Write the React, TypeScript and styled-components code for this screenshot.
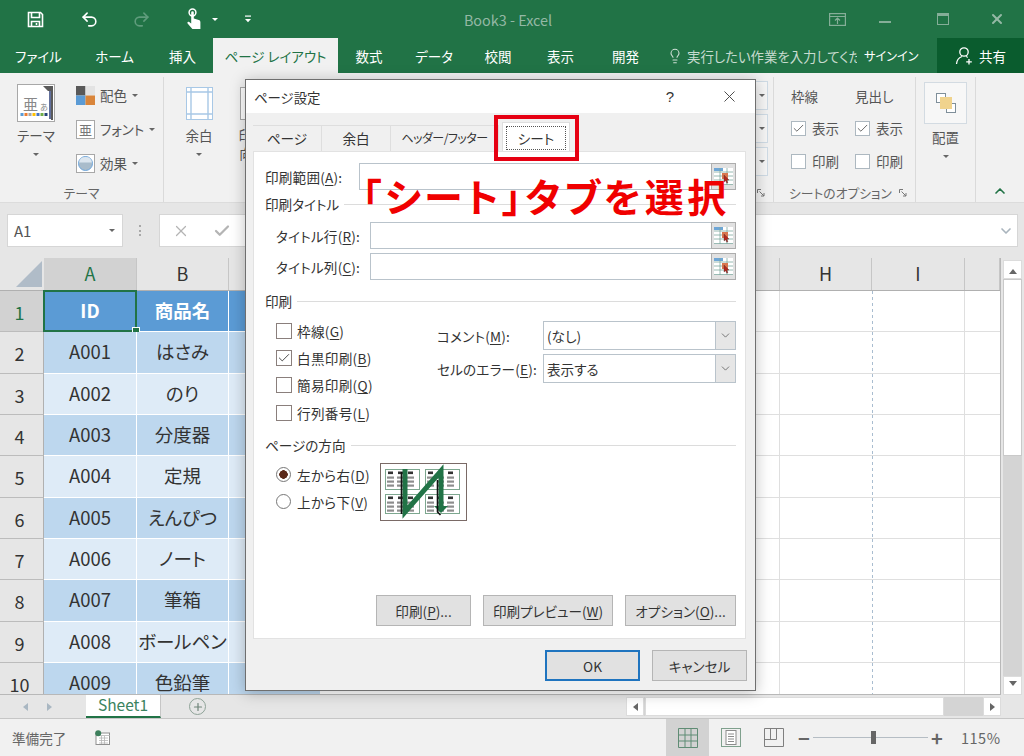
import React from 'react'
import styled, { createGlobalStyle } from 'styled-components'
import { Check, ChevronDown, ChevronUp, Lightbulb, Plus, Redo2, Undo2, X } from 'lucide-react'

const GlobalStyle = createGlobalStyle`
  html, body { margin: 0; padding: 0; background: #e6e6e6; }
  * { box-sizing: border-box; }
  u { text-underline-offset: 2px; }
`

const Caret = styled.span<{ $color?: string }>`
  display: inline-block;
  width: 0;
  height: 0;
  border-left: 3px solid transparent;
  border-right: 3px solid transparent;
  border-top: 3px solid ${p => p.$color || '#666'};
`

const App = () => {
  const rows = [
    ['A001', 'はさみ'], ['A002', 'のり'], ['A003', '分度器'], ['A004', '定規'], ['A005', 'えんぴつ'],
    ['A006', 'ノート'], ['A007', '筆箱'], ['A008', 'ボールペン'], ['A009', '色鉛筆'],
  ]
  return (
    <Page>
      <GlobalStyle />
      <TitleBar>
        <Qat>
          <QatSlot $w={52}><SaveIcon /></QatSlot>
          <QatSlot $w={56}><Undo2 size={19} color="#fff" strokeWidth={2} /></QatSlot>
          <QatSlot $w={48}><Redo2 size={19} color="#5f9c7c" strokeWidth={2} /></QatSlot>
          <QatSlot $w={30} $ml={14}><TouchIcon /></QatSlot>
          <QatSlot $w={12}><Caret $color="#fff" /></QatSlot>
          <QatSlot $w={8} $ml={23}><CustomizeIcon /></QatSlot>
        </Qat>
        <DocTitle>Book3 - Excel</DocTitle>
        <WinButtons>
          <WinSlot $w={48}><RibbonDisplayIcon /></WinSlot>
          <WinSlot $w={48}><MinLine /></WinSlot>
          <WinSlot $w={68}><MaxBox /></WinSlot>
          <WinSlot $w={40}><X size={16} color="#94b8a5" strokeWidth={3} /></WinSlot>
        </WinButtons>
      </TitleBar>

      <TabBar>
        <Tab $w={77}>ファイル</Tab>
        <Tab $w={75}>ホーム</Tab>
        <Tab $w={61}>挿入</Tab>
        <Tab $w={125} $active>ページ レイアウト</Tab>
        <Tab $w={62}>数式</Tab>
        <Tab $w={68}>データ</Tab>
        <Tab $w={60}>校閲</Tab>
        <Tab $w={65}>表示</Tab>
        <Tab $w={65}>開発</Tab>
        <TellMe>
          <Lightbulb size={16} color="#cfe0d6" strokeWidth={1.6} />
          <TellText>実行したい作業を入力してください</TellText>
        </TellMe>
        <SignIn>サインイン</SignIn>
        <Share><ShareIcon />共有</Share>
      </TabBar>

      <Ribbon>
        <Group $w={164}>
          <GroupBody>
            <BigButton $w={62} $ml={5}>
              <ThemeIcon />
              <BigLabel>テーマ</BigLabel>
              <Caret />
            </BigButton>
            <SmallStack>
              <SmallItem><PaletteIcon />配色 <Caret /></SmallItem>
              <SmallItem><FontIcon />フォント <Caret /></SmallItem>
              <SmallItem><EffectIcon />効果 <Caret /></SmallItem>
            </SmallStack>
          </GroupBody>
          <GroupLabel>テーマ</GroupLabel>
        </Group>
        <Group $w={610}>
          <GroupBody>
            <BigButton $w={70} $ml={0}>
              <MarginIcon />
              <BigLabel>余白</BigLabel>
              <Caret />
            </BigButton>
            <BigButton $w={36} $ml={0}>
              <OrientIcon />
              <BigLabel>印刷<br />向き</BigLabel>
            </BigButton>
            <MiniStack>
              <MiniBox><Caret /></MiniBox>
              <MiniBox><Caret /></MiniBox>
              <MiniBox><Caret /></MiniBox>
            </MiniStack>
          </GroupBody>
          <LauncherRow><LauncherIcon /></LauncherRow>
        </Group>
        <Group $w={142}>
          <SheetOptions>
            <OptionColumn>
              <OptionHead>枠線</OptionHead>
              <OptionRow><RibbonCheck><Check size={13} color="#555" strokeWidth={1.6} /></RibbonCheck>表示</OptionRow>
              <OptionRow><RibbonCheck />印刷</OptionRow>
            </OptionColumn>
            <OptionColumn>
              <OptionHead>見出し</OptionHead>
              <OptionRow><RibbonCheck><Check size={13} color="#555" strokeWidth={1.6} /></RibbonCheck>表示</OptionRow>
              <OptionRow><RibbonCheck />印刷</OptionRow>
            </OptionColumn>
          </SheetOptions>
          <LauncherRow>
            <GroupLabelInline>シートのオプション</GroupLabelInline>
            <LauncherIcon />
          </LauncherRow>
        </Group>
        <Group $w={60}>
          <ArrangeButton>
            <ArrangeTile><ArrangeIcon /></ArrangeTile>
            <BigLabel>配置</BigLabel>
            <Caret />
          </ArrangeButton>
        </Group>
        <Collapse><ChevronUp size={16} color="#217346" strokeWidth={2.5} /></Collapse>
      </Ribbon>

      <FormulaBar>
        <NameBox>A1<Caret /></NameBox>
        <Dots />
        <FormulaField>
          <FormulaButton><X size={18} color="#b4b4b4" strokeWidth={1.6} /></FormulaButton>
          <FormulaButton><Check size={18} color="#b4b4b4" strokeWidth={3} /></FormulaButton>
          <FormulaInput />
          <ChevronDown size={16} color="#a9b4bd" strokeWidth={2.5} />
        </FormulaField>
      </FormulaBar>

      <SheetArea>
        <GridArea>
          <HeaderRow>
            <Corner><CornerMark /></Corner>
            {[['A', 93], ['B', 92], ['C', 92], ['D', 92], ['E', 92], ['F', 92], ['G', 183], ['H', 92], ['I', 93], ['', 35]].map(([name, w], i) => (
              <ColHead key={i} $w={w as number} $selected={i === 0}>{name}</ColHead>
            ))}
          </HeaderRow>
          <DataRow>
            <RowHead $selected>1</RowHead>
            <TableCell $w={93} $kind="head">ID</TableCell>
            <TableCell $w={92} $kind="head">商品名</TableCell>
            <TableCell $w={92} $kind="head" />
            <BlankCells />
            <Selection><SelectionHandle /></Selection>
          </DataRow>
          {rows.map(([id, name], i) => (
            <DataRow key={id}>
              <RowHead>{i + 2}</RowHead>
              <TableCell $w={93} $kind={i % 2 ? 'light' : 'dark'}>{id}</TableCell>
              <TableCell $w={92} $kind={i % 2 ? 'light' : 'dark'}>{name}</TableCell>
              <TableCell $w={92} $kind={i % 2 ? 'light' : 'dark'} />
              <BlankCells />
            </DataRow>
          ))}
        </GridArea>
        <VScroll>
          <ScrollButton><ScrollArrow $dir="up" /></ScrollButton>
          <VThumb />
          <ScrollButton><ScrollArrow $dir="down" /></ScrollButton>
        </VScroll>
      </SheetArea>

      <SheetTabs>
        <TabNav><ScrollArrow $dir="left" $faint /><ScrollArrow $dir="right" $faint /></TabNav>
        <SheetTab>Sheet1</SheetTab>
        <AddSheet><Plus size={12} color="#6e8478" strokeWidth={2.4} /></AddSheet>
        <HScroll>
          <HButton><ScrollArrow $dir="left" /></HButton>
          <HThumb />
          <HButton><ScrollArrow $dir="right" /></HButton>
        </HScroll>
      </SheetTabs>

      <StatusBar>
        <Ready>準備完了</Ready>
        <MacroIcon />
        <ViewButtons>
          <ViewButton $active><NormalViewIcon /></ViewButton>
          <ViewButton><PageViewIcon /></ViewButton>
          <ViewButton><BreakViewIcon /></ViewButton>
        </ViewButtons>
        <ZoomSign>−</ZoomSign>
        <ZoomTrack><ZoomThumb /></ZoomTrack>
        <ZoomSign>+</ZoomSign>
        <ZoomValue>115%</ZoomValue>
      </StatusBar>

      <Dialog>
        <DialogTitle>
          <span>ページ設定</span>
          <DialogHelp>?</DialogHelp>
          <X size={19} color="#444" strokeWidth={1.2} />
        </DialogTitle>
        <DialogTabs>
          <DialogTab $w={69}>ページ</DialogTab>
          <DialogTab $w={69}>余白</DialogTab>
          <DialogTab $w={108} $tight>ヘッダー/フッター</DialogTab>
          <ActiveDialogTab><FocusRing>シート</FocusRing></ActiveDialogTab>
        </DialogTabs>
        <Panel>
          <FieldRow>
            <FieldLabel $w={94}>印刷範囲(<u>A</u>):</FieldLabel>
            <TextField />
            <PickerButton><PickerIcon /></PickerButton>
          </FieldRow>
          <SectionHead $top={4}><span>印刷タイトル</span><Rule /></SectionHead>
          <IndentedRow $top={8}>
            <FieldLabel $w={94}>タイトル行(<u>R</u>):</FieldLabel>
            <TextField />
            <PickerButton><PickerIcon /></PickerButton>
          </IndentedRow>
          <IndentedRow $top={4}>
            <FieldLabel $w={94}>タイトル列(<u>C</u>):</FieldLabel>
            <TextField />
            <PickerButton><PickerIcon /></PickerButton>
          </IndentedRow>
          <SectionHead $top={11}><span>印刷</span><Rule /></SectionHead>
          <PrintOptions>
            <CheckColumn>
              <CheckRow><CheckBox />枠線(<u>G</u>)</CheckRow>
              <CheckRow><CheckBox><Check size={14} color="#333" strokeWidth={1.5} /></CheckBox>白黒印刷(<u>B</u>)</CheckRow>
              <CheckRow><CheckBox />簡易印刷(<u>Q</u>)</CheckRow>
              <CheckRow><CheckBox />行列番号(<u>L</u>)</CheckRow>
            </CheckColumn>
            <SelectColumn>
              <SelectRow>
                <FieldLabel $w={106}>コメント(<u>M</u>):</FieldLabel>
                <SelectBox>(なし)<SelectArrow><ChevronDown size={13} color="#555" strokeWidth={1.4} /></SelectArrow></SelectBox>
              </SelectRow>
              <SelectRow>
                <FieldLabel $w={106}>セルのエラー(<u>E</u>):</FieldLabel>
                <SelectBox>表示する<SelectArrow><ChevronDown size={13} color="#555" strokeWidth={1.4} /></SelectArrow></SelectBox>
              </SelectRow>
            </SelectColumn>
          </PrintOptions>
          <SectionHead $top={9}><span>ページの方向</span><Rule /></SectionHead>
          <OrderRow>
            <RadioColumn>
              <RadioRow><Radio $on />左から右(<u>D</u>)</RadioRow>
              <RadioRow><Radio />上から下(<u>V</u>)</RadioRow>
            </RadioColumn>
            <OrderPicture><PageOrderIcon /></OrderPicture>
          </OrderRow>
          <PanelButtons>
            <DialogButton $w={95}>印刷(<u>P</u>)...</DialogButton>
            <DialogButton $w={130}>印刷プレビュー(<u>W</u>)</DialogButton>
            <DialogButton $w={111}>オプション(<u>O</u>)...</DialogButton>
          </PanelButtons>
        </Panel>
        <DialogFooter>
          <DialogButton $w={95} $primary>OK</DialogButton>
          <DialogButton $w={95}>キャンセル</DialogButton>
        </DialogFooter>
      </Dialog>

      <TabHighlight />
      <Callout>「シート」タブを選択</Callout>
    </Page>
  )
}

export default App

/* ---- icons ---- */

const SaveIcon = () => (
  <svg width="17" height="17" viewBox="0 0 17 17" fill="none" stroke="#fff" strokeWidth="1.6">
    <path d="M1.5 1.5h12l2 2v12h-14z" />
    <path d="M4.5 1.5v5h8v-5" />
    <path d="M4.5 15.5v-5h8v5" />
    <path d="M9.5 12v2" />
  </svg>
)

const TouchIcon = () => (
  <svg width="16" height="22" viewBox="0 0 16 22">
    <circle cx="6.5" cy="4.5" r="3.4" fill="none" stroke="#fff" strokeWidth="1.5" />
    <path d="M5.2 4.5a1.3 1.3 0 0 1 2.6 0v6l5 1.4c1.2.4 1.6 1.2 1.6 2.3V21H6.4L1.6 15.4c-.7-1 .5-2.2 1.6-1.4l2 1.4z" fill="#fff" />
  </svg>
)

const CustomizeIcon = () => (
  <svg width="8" height="8" viewBox="0 0 8 8" fill="#fff">
    <rect x="1" y="0.5" width="6" height="1.2" />
    <path d="M1 4h6L4 7.2z" />
  </svg>
)

const RibbonDisplayIcon = () => (
  <svg width="17" height="13" viewBox="0 0 17 13" fill="none" stroke="#85ae98" strokeWidth="1.2">
    <rect x="0.6" y="0.6" width="15.8" height="11.8" />
    <path d="M1 3.5h15M8.5 11V5.5M6 7.5l2.5-2.5L11 7.5" />
  </svg>
)

const ShareIcon = () => (
  <svg width="19" height="19" viewBox="0 0 19 19" fill="none" stroke="#fff" strokeWidth="1.3">
    <circle cx="9" cy="6" r="4.2" />
    <path d="M1.5 18c.3-4 2.5-6.5 5.5-7.5M11 10.5c.6.2 1.2.5 1.7.9M14 13v5.5M11.2 15.8h5.6" />
  </svg>
)

const ThemeIcon = () => (
  <svg width="38" height="38" viewBox="0 0 38 38">
    <rect x="0.5" y="0.5" width="37" height="37" fill="#fff" stroke="#a8a8a8" />
    <path d="M26 2h10v34h-2V7h-3l-5-5z" fill="#5a5a5a" />
    <path d="M33 7v28" stroke="#2c3f7a" strokeWidth="1.5" />
    <text x="6" y="26" fontSize="15" fill="#888" fontFamily="'Noto Sans CJK JP',sans-serif">亜</text>
    <text x="23" y="26" fontSize="8" fill="#888" fontFamily="'Noto Sans CJK JP',sans-serif">あ</text>
    {['#5b9bd5', '#ed7d31', '#a5a5a5', '#ffc000', '#4472c4', '#70ad47', '#264478'].map((c, i) => (
      <rect key={c} x={3.5 + i * 4} y="29" width="3" height="3" fill={c} />
    ))}
  </svg>
)

const PaletteIcon = () => (
  <svg width="19" height="19" viewBox="0 0 19 19">
    <rect x="0" y="0" width="9.5" height="9.5" fill="#595959" />
    <rect x="9.5" y="0" width="9.5" height="9.5" fill="#e3e3e3" />
    <rect x="0" y="9.5" width="9.5" height="9.5" fill="#5b9bd5" />
    <rect x="9.5" y="9.5" width="9.5" height="9.5" fill="#d9853b" />
  </svg>
)

const FontIcon = () => (
  <svg width="19" height="19" viewBox="0 0 19 19">
    <rect x="0.5" y="0.5" width="18" height="18" fill="#fff" stroke="#a8a8a8" />
    <text x="3" y="14.5" fontSize="13" fill="#777" fontFamily="'Noto Sans CJK JP',sans-serif">亜</text>
  </svg>
)

const EffectIcon = () => (
  <svg width="19" height="19" viewBox="0 0 19 19">
    <rect x="0.5" y="0.5" width="18" height="18" fill="#fff" stroke="#a8a8a8" />
    <circle cx="9.5" cy="9.5" r="7" fill="#a9bccb" stroke="#6ea6dc" strokeWidth="1" />
    <path d="M3 8.5a6.6 6.6 0 0 1 13 0z" fill="#dce6ef" />
  </svg>
)

const MarginIcon = () => (
  <MarginWrap>
    <svg width="27" height="33" viewBox="0 0 27 33" fill="none">
      <rect x="0.5" y="0.5" width="26" height="32" fill="#fff" stroke="#a8c8e6" />
      <path d="M5 1v31M22 1v31M1 5h25M1 27h25" stroke="#a8c8e6" strokeWidth="1.4" />
    </svg>
  </MarginWrap>
)

const OrientIcon = () => (
  <MarginWrap>
    <svg width="24" height="33" viewBox="0 0 24 33">
      <rect x="0.5" y="0.5" width="23" height="32" fill="#fff" stroke="#a8a8a8" />
    </svg>
  </MarginWrap>
)

const LauncherIcon = () => (
  <svg width="8" height="8" viewBox="0 0 8 8" fill="none" stroke="#777">
    <path d="M0.5 4V0.5H4M2.5 2.5L7 7M7 4v3H4" />
  </svg>
)

const ArrangeIcon = () => (
  <svg width="20" height="20" viewBox="0 0 20 20">
    <rect x="0.5" y="0.5" width="9" height="9" fill="#fff" stroke="#7f8f9a" />
    <rect x="10.5" y="10.5" width="9" height="9" fill="#fff" stroke="#7f8f9a" />
    <rect x="4" y="4" width="12" height="12" fill="#f0d38d" />
  </svg>
)

const PickerIcon = () => (
  <svg width="19" height="19" viewBox="0 0 19 19">
    <rect x="0" y="1" width="19" height="17" fill="#fff" />
    <rect x="0" y="1" width="9" height="3" fill="#6ea6d6" />
    <path d="M0 5h19M0 9h19M0 13h19M0 17.5h19M6 1v17M13 1v17" stroke="#7fa8a0" strokeWidth="0.8" />
    <rect x="8" y="6" width="6" height="6" fill="#d9764e" />
    <path d="M10 8l5 5-2 .3.9 2.4-1.2.5-.9-2.4L10 15z" fill="#b3261e" stroke="#333" strokeWidth="0.3" />
  </svg>
)

const MiniPage = ({ x, y, h }: { x: number; y: number; h: number }) => (
  <g>
    <rect x={x + 0.5} y={y + 0.5} width="34" height={h} fill="#fff" stroke="#7da78f" />
    {[4, 14, 24].map(c => (
      <g key={c}>
        <rect x={x + c - 1} y={y + 2.5} width="5" height="2.6" fill="#333" />
        {[0, 1, 2].map(r => (
          <rect key={r} x={x + c - 2} y={y + 7.5 + r * 4} width="7" height="2.2" fill="#8d8d8d" />
        ))}
      </g>
    ))}
  </g>
)

const PageOrderIcon = () => (
  <svg width="87" height="58" viewBox="0 0 87 58">
    <rect x="0.5" y="0.5" width="86" height="57" fill="#fff" stroke="#7a6a66" />
    <MiniPage x={5} y={6} h={20} />
    <MiniPage x={45} y={6} h={20} />
    <MiniPage x={5} y={31} h={19} />
    <MiniPage x={45} y={31} h={19} />
    <path d="M25 6v43L61 8v36" fill="none" stroke="#217346" strokeWidth="5" />
    <path d="M54 43h14l-7 7z" fill="#217346" />
    <path d="M21.5 9v42M57.5 17v32l3 3" fill="none" stroke="#111" strokeWidth="1.6" />
  </svg>
)

const MacroIcon = () => (
  <MacroWrap>
    <svg width="15" height="15" viewBox="0 0 15 15">
      <rect x="1" y="3" width="13.5" height="11.5" fill="#fff" stroke="#8f8f8f" />
      <path d="M1 5.5h14M4 8h9M4 10.5h9M4 13h9M6.5 6v8M9.5 6v8" stroke="#b5b5b5" strokeWidth="0.8" />
      <circle cx="3.2" cy="3.2" r="3" fill="#3d7f5c" />
    </svg>
  </MacroWrap>
)

const NormalViewIcon = () => (
  <svg width="20" height="20" viewBox="0 0 20 20" fill="none" stroke="#5f8c74">
    <path d="M0.5 0.5h19v19h-19zM7 0.5v19M13 0.5v19M0.5 7h19M0.5 13h19" />
  </svg>
)

const PageViewIcon = () => (
  <svg width="20" height="19" viewBox="0 0 20 19" fill="none">
    <rect x="0.5" y="0.5" width="19" height="18" stroke="#7fa08d" />
    <rect x="5" y="2.5" width="10" height="14" fill="#fff" stroke="#8c8c8c" />
    <path d="M7 6h6M7 8.5h6M7 11h6M7 13.5h6" stroke="#8c8c8c" />
  </svg>
)

const BreakViewIcon = () => (
  <svg width="20" height="19" viewBox="0 0 20 19" fill="none" stroke="#7f7f7f">
    <path d="M0.5 0.5h19v18h-19zM0.5 11.5h12v-11M6.5 0.5v11" />
  </svg>
)

/* ---- page ---- */

const sans = `"Noto Sans CJK JP", "Noto Sans", sans-serif`

const Page = styled.div`
  position: relative;
  width: 1024px;
  height: 756px;
  overflow: hidden;
  display: flex;
  flex-direction: column;
  font-family: ${sans};
  font-feature-settings: "palt";
  background: #e6e6e6;
`

const TitleBar = styled.div`
  height: 38px;
  flex: none;
  display: flex;
  align-items: center;
  background: #217346;
  padding-left: 9px;
`

const Qat = styled.div`
  width: 259px;
  display: flex;
  align-items: center;
`

const QatSlot = styled.div<{ $w: number; $ml?: number }>`
  width: ${p => p.$w}px;
  margin-left: ${p => p.$ml || 0}px;
  display: flex;
  align-items: center;
  justify-content: center;
`

const DocTitle = styled.div`
  width: 480px;
  text-align: center;
  font-size: 14.4px;
  color: #94b8a5;
`

const WinButtons = styled.div`
  margin-left: auto;
  display: flex;
  align-items: center;
  padding-right: 7px;
`

const WinSlot = styled.div<{ $w: number }>`
  width: ${p => p.$w}px;
  display: flex;
  justify-content: center;
  align-items: center;
`

const MinLine = styled.div`
  width: 12px;
  height: 2px;
  margin-top: 6px;
  background: #85ae98;
`

const MaxBox = styled.div`
  width: 12px;
  height: 12px;
  border: 1px solid #85ae98;
  border-top-width: 3px;
`

const TabBar = styled.div`
  height: 35px;
  flex: none;
  display: flex;
  background: #217346;
  color: #fff;
  font-size: 13.5px;
`

const Tab = styled.div<{ $w: number; $active?: boolean }>`
  width: ${p => p.$w}px;
  display: flex;
  align-items: center;
  justify-content: center;
  background: ${p => (p.$active ? '#f1f1f1' : 'transparent')};
  color: ${p => (p.$active ? '#217346' : '#fff')};
`

const TellMe = styled.div`
  width: 206px;
  display: flex;
  align-items: center;
  padding-left: 9px;
  gap: 4px;
  overflow: hidden;
`

const TellText = styled.span`
  white-space: nowrap;
  color: #c7dbcf;
  font-size: 13.4px;
  width: 170px;
  overflow: hidden;
`

const SignIn = styled.div`
  width: 73px;
  display: flex;
  align-items: center;
  font-size: 12.2px;
`

const Share = styled.div`
  width: 87px;
  display: flex;
  align-items: center;
  justify-content: center;
  gap: 5px;
  background: #0a5c2e;
`

const Ribbon = styled.div`
  height: 130px;
  flex: none;
  display: flex;
  background: #f1f1f1;
  color: #555;
  font-size: 13.5px;
  border-bottom: 1px solid #dcdcdc;
`

const Group = styled.div<{ $w: number }>`
  width: ${p => p.$w}px;
  margin-top: 4px;
  display: flex;
  flex-direction: column;
  border-right: 1px solid #dadada;
`

const GroupBody = styled.div`
  flex: 1;
  display: flex;
`

const GroupLabel = styled.div`
  text-align: center;
  font-size: 12.8px;
  color: #666;
  line-height: 18px;
  white-space: nowrap;
`

const GroupLabelInline = styled(GroupLabel)`
  margin-right: auto;
  padding-left: 15px;
`

const BigButton = styled.div<{ $w: number; $ml: number }>`
  width: ${p => p.$w}px;
  margin-left: ${p => p.$ml}px;
  padding-top: 7px;
  display: flex;
  flex-direction: column;
  align-items: center;
  flex: none;
`

const MarginWrap = styled.div`
  height: 38px;
  padding-top: 3px;
  display: flex;
`

const BigLabel = styled.div`
  margin: 4px 0 9px;
  line-height: 18px;
  text-align: center;
`

const SmallStack = styled.div`
  display: flex;
  flex-direction: column;
  padding: 8px 0 0 9px;
  gap: 14px;
`

const SmallItem = styled.div`
  display: flex;
  align-items: center;
  height: 20px;
  gap: 5px;
  white-space: nowrap;
`

const MiniStack = styled.div`
  margin: 4px 5px 0 auto;
  display: flex;
  flex-direction: column;
  gap: 4px;
`

const MiniBox = styled.div`
  width: 12px;
  height: 29px;
  display: flex;
  align-items: center;
  justify-content: center;
  border: 1px solid #cfdbe5;
  border-left: 0;
  background: #f6f6f6;
`

const LauncherRow = styled.div`
  height: 18px;
  flex: none;
  display: flex;
  align-items: center;
  justify-content: flex-end;
  padding-right: 8px;
`

const SheetOptions = styled.div`
  flex: 1;
  display: flex;
  padding: 9px 0 0 17px;
  gap: 16px;
`

const OptionColumn = styled.div`
  width: 48px;
  display: flex;
  flex-direction: column;
`

const OptionHead = styled.div`
  line-height: 20px;
  margin-bottom: 14px;
  white-space: nowrap;
`

const OptionRow = styled.div`
  display: flex;
  align-items: center;
  gap: 6px;
  height: 16px;
  margin-bottom: 17px;
  white-space: nowrap;
  &:last-child { margin-bottom: 0; }
`

const RibbonCheck = styled.span`
  width: 15px;
  height: 15px;
  flex: none;
  display: flex;
  align-items: center;
  justify-content: center;
  background: #fff;
  border: 1px solid #adb8c0;
`

const ArrangeButton = styled.div`
  display: flex;
  flex-direction: column;
  align-items: center;
  padding-top: 5px;
`

const ArrangeTile = styled.div`
  width: 43px;
  height: 42px;
  display: flex;
  align-items: center;
  justify-content: center;
  background: #f7f7f7;
  border: 1px solid #d3dbe2;
`

const Collapse = styled.div`
  width: 48px;
  display: flex;
  align-items: flex-end;
  justify-content: center;
  padding-bottom: 3px;
`

const FormulaBar = styled.div`
  height: 55px;
  flex: none;
  display: flex;
  align-items: flex-start;
  padding: 11px 6px 0 7px;
  background: #e6e6e6;
`

const NameBox = styled.div`
  width: 116px;
  height: 33px;
  display: flex;
  align-items: center;
  justify-content: space-between;
  padding: 0 7px 0 6px;
  background: #fff;
  border: 1px solid #d6d6d6;
  font-size: 15px;
  color: #555;
`

const Dots = styled.div`
  width: 3px;
  height: 11px;
  margin: 11px 17px 0 16px;
  border-left: 2px dotted #a8a8a8;
`

const FormulaField = styled.div`
  flex: 1;
  height: 33px;
  display: flex;
  align-items: center;
  padding-right: 3px;
  background: #fff;
  border: 1px solid #d6d6d6;
`

const FormulaButton = styled.div`
  width: 41px;
  display: flex;
  justify-content: center;
`

const FormulaInput = styled.div`
  flex: 1;
`

const SheetArea = styled.div`
  height: 437px;
  flex: none;
  display: flex;
  background: #e6e6e6;
`

const GridArea = styled.div`
  width: 1001px;
  flex: none;
  display: flex;
  flex-direction: column;
  overflow: hidden;
  border-right: 1px solid #b8b8b8;
  border-bottom: 1px solid #b8b8b8;
`

const HeaderRow = styled.div`
  height: 33px;
  flex: none;
  display: flex;
  border-bottom: 1px solid #b0b0b0;
`

const Corner = styled.div`
  width: 44px;
  flex: none;
  padding: 3px 2px 0 0;
  display: flex;
  justify-content: flex-end;
`

const CornerMark = styled.div`
  width: 26px;
  height: 26px;
  background: #b0bcc8;
  clip-path: polygon(100% 0, 100% 100%, 0 100%);
`

const ColHead = styled.div<{ $w: number; $selected?: boolean }>`
  width: ${p => p.$w}px;
  flex: none;
  text-align: center;
  line-height: 31px;
  font-size: 18px;
  color: ${p => (p.$selected ? '#217346' : '#333')};
  background: ${p => (p.$selected ? '#d2d2d2' : 'transparent')};
  border-right: 1px solid #c6c6c6;
  white-space: nowrap;
  overflow: hidden;
`

const DataRow = styled.div`
  position: relative;
  height: 41.33px;
  flex: none;
  display: flex;
`

const RowHead = styled.div<{ $selected?: boolean }>`
  width: 44px;
  flex: none;
  display: flex;
  align-items: center;
  justify-content: center;
  padding: 2px 4px 0 0;
  font-size: 18px;
  color: ${p => (p.$selected ? '#217346' : '#333')};
  background: ${p => (p.$selected ? '#d2d2d2' : '#e6e6e6')};
  border-bottom: 1px solid #bcbcbc;
  border-right: 1px solid #b0b0b0;
`

const cellColors = { head: '#5b9bd5', dark: '#bdd7ee', light: '#deebf7' }

const TableCell = styled.div<{ $w: number; $kind: 'head' | 'dark' | 'light' }>`
  width: ${p => p.$w}px;
  flex: none;
  display: flex;
  align-items: center;
  justify-content: center;
  padding-bottom: 2px;
  font-size: 18.5px;
  white-space: nowrap;
  background: ${p => cellColors[p.$kind]};
  color: ${p => (p.$kind === 'head' ? '#fff' : '#333')};
  font-weight: ${p => (p.$kind === 'head' ? 700 : 400)};
  border-right: 1px solid #fff;
  border-bottom: 1px solid #fff;
`

const BlankCells = styled.div`
  flex: 1;
  background-color: #fff;
  background-image:
    linear-gradient(to right, transparent 458px, #dfdfdf 458px, #dfdfdf 459px, transparent 459px, transparent 643px, #dfdfdf 643px, #dfdfdf 644px, transparent 644px),
    repeating-linear-gradient(to bottom, #a9bdd0 0 3px, transparent 3px 6px);
  background-size: 100% 100%, 1px 100%;
  background-position: 0 0, 551px 0;
  background-repeat: no-repeat;
  border-bottom: 1px solid #dfdfdf;
`

const Selection = styled.div`
  position: absolute;
  left: 43px;
  top: -1px;
  width: 94px;
  height: 42px;
  border: 2px solid #217346;
`

const SelectionHandle = styled.div`
  position: absolute;
  right: -5px;
  bottom: -5px;
  width: 6px;
  height: 6px;
  background: #217346;
  border: 1px solid #fff;
  box-sizing: content-box;
`

const VScroll = styled.div`
  width: 19px;
  margin: 2px 0 0 2px;
  display: flex;
  flex-direction: column;
  background: #d4d4d4;
`

const ScrollButton = styled.div`
  height: 19px;
  flex: none;
  display: flex;
  align-items: center;
  justify-content: center;
  background: #fff;
  border: 1px solid #dcdcdc;
`

const VThumb = styled.div`
  height: 177px;
  margin: 0 0 auto;
  background: #fff;
  border: 1px solid #c9c9c9;
`

const arrowEdge: Record<string, string> = { up: 'bottom', down: 'top', left: 'right', right: 'left' }

const ScrollArrow = styled.span<{ $dir: 'up' | 'down' | 'left' | 'right'; $faint?: boolean }>`
  display: inline-block;
  width: 0;
  height: 0;
  border: 4px solid transparent;
  border-${p => arrowEdge[p.$dir]}: 5px solid ${p => (p.$faint ? '#a9b7c2' : '#666')};
  ${p => `border-${p.$dir}-width: 0;`}
`

const SheetTabs = styled.div`
  height: 23px;
  flex: none;
  display: flex;
  align-items: stretch;
  background: #e6e6e6;
`

const TabNav = styled.div`
  width: 86px;
  flex: none;
  display: flex;
  align-items: center;
  justify-content: center;
  gap: 19px;
  padding-right: 12px;
`

const SheetTab = styled.div`
  width: 75px;
  flex: none;
  text-align: center;
  line-height: 19px;
  font-size: 15.5px;
  color: #3b8360;
  background: #fff;
  border-bottom: 2px solid #217346;
  border-right: 1px solid #c6c6c6;
`

const AddSheet = styled.div`
  width: 17px;
  height: 17px;
  margin: 3px 0 0 28px;
  display: flex;
  align-items: center;
  justify-content: center;
  border-radius: 50%;
  border: 1.5px solid #8fa398;
`

const HScroll = styled.div`
  margin-left: 420px;
  width: 375px;
  height: 19px;
  margin-top: 2px;
  display: flex;
  background: #d4d4d4;
`

const HButton = styled.div`
  width: 18px;
  flex: none;
  display: flex;
  align-items: center;
  justify-content: center;
  background: #fff;
  border: 1px solid #dcdcdc;
  &:last-child { margin-left: auto; }
`

const HThumb = styled.div`
  width: 299px;
  margin-left: 1px;
  background: #fff;
  border: 1px solid #dcdcdc;
`

const StatusBar = styled.div`
  flex: 1;
  display: flex;
  align-items: center;
  background: #f1f1f1;
  border-top: 1px solid #c6c6c6;
  color: #666;
  font-size: 13.6px;
  padding-left: 12px;
`

const Ready = styled.div`
  width: 83px;
`

const MacroWrap = styled.div`
  width: 571px;
  display: flex;
`

const ViewButtons = styled.div`
  display: flex;
  align-self: stretch;
`

const ViewButton = styled.div<{ $active?: boolean }>`
  width: 43px;
  display: flex;
  align-items: center;
  justify-content: center;
  background: ${p => (p.$active ? '#d2d2d2' : 'transparent')};
`

const ZoomSign = styled.div`
  width: 18px;
  text-align: center;
  font-size: 20px;
  font-weight: 700;
  line-height: 20px;
  color: #666;
`

const ZoomTrack = styled.div`
  position: relative;
  width: 115px;
  height: 1px;
  background: #b5bdc4;
`

const ZoomThumb = styled.div`
  position: absolute;
  left: 58px;
  top: -6px;
  width: 5px;
  height: 13px;
  background: #666;
`

const ZoomValue = styled.div`
  margin-left: 15px;
  font-size: 14.5px;
  letter-spacing: 0.5px;
`

/* ---- dialog ---- */

const Dialog = styled.div`
  position: absolute;
  left: 245px;
  top: 79px;
  width: 511px;
  height: 612px;
  display: flex;
  flex-direction: column;
  background: #f0f0f0;
  border: 1px solid #6f6f6f;
  box-shadow: 0 2px 14px rgba(0, 0, 0, 0.25);
  color: #333;
  font-size: 13.6px;
`

const DialogTitle = styled.div`
  height: 33px;
  flex: none;
  display: flex;
  align-items: center;
  padding: 0 16px 0 8px;
  background: #fff;
  font-size: 13.4px;
`

const DialogHelp = styled.span`
  margin: 0 46px 0 auto;
  font-size: 15px;
  font-family: "Liberation Sans", sans-serif;
`

const DialogTabs = styled.div`
  height: 38px;
  flex: none;
  display: flex;
  align-items: flex-end;
  padding-left: 7px;
`

const DialogTab = styled.div<{ $w: number; $tight?: boolean }>`
  width: ${p => p.$w}px;
  height: 26px;
  padding-bottom: 2px;
  display: flex;
  align-items: center;
  justify-content: center;
  white-space: nowrap;
  font-size: ${p => (p.$tight ? '12px' : '13.6px')};
  letter-spacing: ${p => (p.$tight ? '-0.5px' : '0')};
  border-top: 1px solid #dedede;
  border-right: 1px solid #dedede;
`

const ActiveDialogTab = styled.div`
  width: 68px;
  height: 29px;
  margin-left: 3px;
  padding: 3px 3px 1px;
  background: #fff;
  border: 1px solid #dedede;
  border-bottom: 0;
`

const FocusRing = styled.div`
  height: 100%;
  display: flex;
  align-items: center;
  justify-content: center;
  border: 1px dotted #555;
  font-size: 13.6px;
`

const Panel = styled.div`
  height: 488px;
  flex: none;
  margin: 0 9px 0 7px;
  padding: 11px 9px 0 11px;
  display: flex;
  flex-direction: column;
  background: #fff;
  border: 1px solid #e2e2e2;
`

const FieldRow = styled.div`
  height: 27px;
  flex: none;
  display: flex;
  align-items: center;
`

const IndentedRow = styled(FieldRow)<{ $top: number }>`
  margin-top: ${p => p.$top}px;
  padding-left: 11px;
`

const FieldLabel = styled.div<{ $w: number }>`
  width: ${p => p.$w}px;
  flex: none;
  white-space: nowrap;
  font-size: 13.6px;
  letter-spacing: 0.2px;
`

const TextField = styled.div`
  flex: 1;
  height: 100%;
  background: #fff;
  border: 1px solid #b9c3cb;
  border-right: 0;
`

const PickerButton = styled.div`
  width: 25px;
  height: 100%;
  flex: none;
  display: flex;
  align-items: center;
  justify-content: center;
  background: #e1e1e1;
  border: 1px solid #adadad;
`

const SectionHead = styled.div<{ $top: number }>`
  height: 20px;
  flex: none;
  margin-top: ${p => p.$top}px;
  display: flex;
  align-items: center;
  gap: 5px;
  white-space: nowrap;
  font-size: 13.6px;
`

const Rule = styled.div`
  flex: 1;
  height: 1px;
  background: #dcdcdc;
`

const PrintOptions = styled.div`
  flex: none;
  margin-top: 6px;
  padding-left: 11px;
  display: flex;
`

const CheckColumn = styled.div`
  width: 161px;
  flex: none;
  display: flex;
  flex-direction: column;
`

const CheckRow = styled.div`
  height: 27.3px;
  display: flex;
  align-items: center;
  white-space: nowrap;
  font-size: 13.6px;
  letter-spacing: 0.3px;
`

const CheckBox = styled.span`
  width: 16px;
  height: 16px;
  flex: none;
  margin-right: 5px;
  display: flex;
  align-items: center;
  justify-content: center;
  border: 1px solid #8a7f7c;
`

const SelectColumn = styled.div`
  flex: 1;
  padding-top: 4px;
  display: flex;
  flex-direction: column;
  gap: 4px;
`

const SelectRow = styled.div`
  height: 29px;
  display: flex;
  align-items: center;
`

const SelectBox = styled.div`
  flex: 1;
  height: 100%;
  display: flex;
  align-items: center;
  justify-content: space-between;
  padding-left: 3px;
  background: #fff;
  border: 1px solid #b9c3cb;
  font-size: 13.6px;
`

const SelectArrow = styled.span`
  width: 20px;
  height: 100%;
  display: flex;
  align-items: center;
  justify-content: center;
  background: #e6e6e6;
  border-left: 1px solid #b9c3cb;
`

const OrderRow = styled.div`
  flex: none;
  margin-top: 6px;
  padding-left: 11px;
  display: flex;
`

const RadioColumn = styled.div`
  width: 104px;
  flex: none;
  display: flex;
  flex-direction: column;
`

const RadioRow = styled.div`
  height: 27px;
  display: flex;
  align-items: center;
  white-space: nowrap;
  font-size: 13.6px;
  letter-spacing: 0.3px;
`

const Radio = styled.span<{ $on?: boolean }>`
  width: 15px;
  height: 15px;
  flex: none;
  margin-right: 6px;
  border-radius: 50%;
  border: 1px solid #777;
  background: ${p => (p.$on ? 'radial-gradient(circle, #5c2a1a 0 4px, #fff 4.5px)' : '#fff')};
`

const OrderPicture = styled.div`
  width: 87px;
  height: 58px;
  margin-top: 2px;
  display: flex;
`

const PanelButtons = styled.div`
  margin-top: auto;
  padding-bottom: 12px;
  display: flex;
  justify-content: flex-end;
  gap: 12px;
`

const DialogButton = styled.div<{ $w: number; $primary?: boolean }>`
  width: ${p => p.$w}px;
  height: 31px;
  display: flex;
  align-items: center;
  justify-content: center;
  white-space: nowrap;
  background: #e1e1e1;
  border: ${p => (p.$primary ? '2px solid #1f74bf' : '1px solid #b5b5b5')};
  font-size: 13.6px;
`

const DialogFooter = styled.div`
  flex: 1;
  display: flex;
  justify-content: flex-end;
  gap: 12px;
  padding: 11px 8px 0 0;
`

const TabHighlight = styled.div`
  position: absolute;
  left: 494px;
  top: 115px;
  width: 85px;
  height: 46px;
  border: 4px solid #e60012;
`

const Callout = styled.div`
  position: absolute;
  left: 362px;
  top: 168px;
  font-size: 39px;
  line-height: 54px;
  font-weight: 700;
  letter-spacing: 3.5px;
  color: #f00000;
  white-space: nowrap;
`
